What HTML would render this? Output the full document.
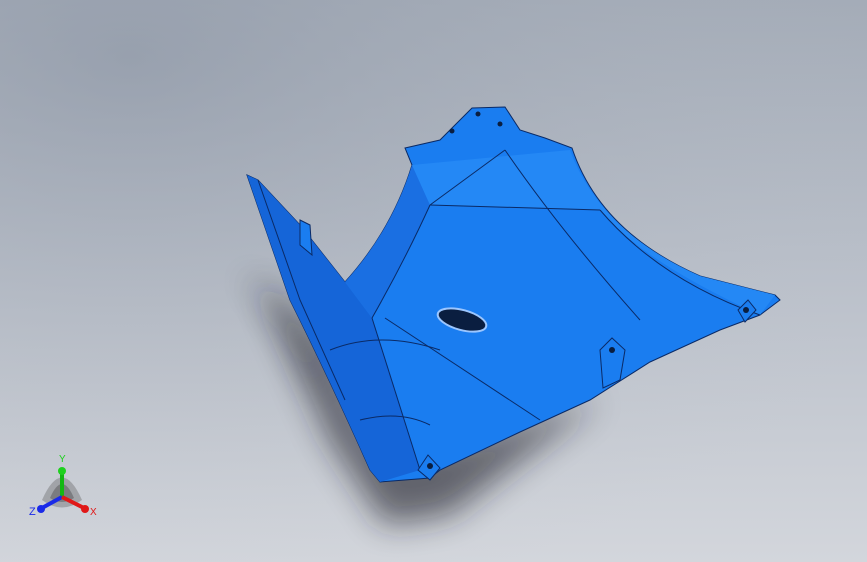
<!DOCTYPE html>
<html><head><meta charset="utf-8"><style>
html,body{margin:0;padding:0;width:867px;height:562px;overflow:hidden}
body{background:linear-gradient(180deg,#a2aab6 0%,#b8bec8 45%,#d3d6dc 100%);font-family:"Liberation Sans",sans-serif}
</style></head><body>
<svg width="867" height="562" viewBox="0 0 867 562" style="position:absolute;left:0;top:0">
<defs>
<filter id="b" x="-30%" y="-30%" width="160%" height="160%"><feGaussianBlur stdDeviation="16"/></filter>
<radialGradient id="bg" cx="0.15" cy="0.1" r="1"><stop offset="0" stop-color="#8e97a6" stop-opacity="0.6"/><stop offset="1" stop-color="#c0c5cd" stop-opacity="0"/></radialGradient>
</defs>
<rect width="867" height="562" fill="url(#bg)"/>
<path d="M260,280 L330,350 L380,450 L470,440 L600,400 L520,460 L450,515 L385,525 L330,440 Z" fill="#1c1f28" opacity="0.6" filter="url(#b)"/>
<path d="M240,270 L300,320 L320,400 L290,330 Z" fill="#1c1f28" opacity="0.4" filter="url(#b)"/>
<path d="M247,175 L258,180 L300,225 L345,282 Q392,230 412,165 L405,148 L440,140 L472,108 L505,107 L520,130 L545,138 L572,148 Q600,232 700,276 L775,295 L780,300 L760,315 L720,330 L650,362 L590,400 L520,432 L440,470 L430,478 L380,482 L370,470 Q330,380 290,300 Z" fill="#1a7df0" stroke="#0a2a66" stroke-width="1"/>
<path d="M247,175 L258,180 L300,225 L345,282 L372,318 L420,470 L380,482 L370,470 Q330,380 290,300 Z" fill="#1565d8"/>
<path d="M345,282 Q392,230 412,165 L430,205 Q405,260 372,318 Z" fill="#1a6fe2"/>
<path d="M412,165 L570,150 Q600,232 700,276 L775,295 L760,315 Q640,260 600,210 L430,205 Z" fill="#2488f5"/>
<g fill="none" stroke="#0a2a66" stroke-width="1">
<path d="M430,205 Q405,260 372,318"/>
<path d="M430,205 L505,150"/>
<path d="M430,205 L600,210"/>
<path d="M505,150 Q560,230 640,320"/>
<path d="M372,318 L420,470"/>
<path d="M385,318 L540,420"/>
<path d="M330,350 Q380,330 440,350"/>
<path d="M360,420 Q400,410 430,425"/>
<path d="M600,210 Q660,280 760,315"/>
<path d="M258,180 L300,300 L345,400"/>
</g>
<ellipse cx="462" cy="320" rx="25" ry="10" transform="rotate(15 462 320)" fill="#0a1e40" stroke="#9bc6ff" stroke-width="2"/>
<path d="M300,220 L310,225 L312,255 L300,245 Z" fill="#1a7df0" stroke="#0a2a66"/>
<path d="M600,350 L612,338 L625,350 L620,380 L603,388 Z" fill="#1a7df0" stroke="#0a2a66"/>
<circle cx="612" cy="350" r="3" fill="#0a1e40"/>
<path d="M738,310 L748,300 L756,310 L745,322 Z" fill="#1a7df0" stroke="#0a2a66"/>
<circle cx="746" cy="310" r="3" fill="#0a1e40"/>
<path d="M418,470 L428,455 L440,468 L430,480 Z" fill="#1a7df0" stroke="#0a2a66"/>
<circle cx="430" cy="466" r="3" fill="#0a1e40"/>
<circle cx="452" cy="131" r="2.5" fill="#0a1e40"/><circle cx="478" cy="114" r="2.5" fill="#0a1e40"/><circle cx="500" cy="124" r="2.5" fill="#0a1e40"/>
<path d="M42,500 Q62,455 82,500 Q62,515 42,500Z" fill="#555" opacity="0.35"/>
<path d="M50,498 Q62,470 74,498 Q62,506 50,498Z" fill="#333" opacity="0.35"/>
<line x1="62" y1="497" x2="62" y2="472" stroke="#14b814" stroke-width="4"/>
<circle cx="62" cy="471" r="4" fill="#1ed01e"/>
<line x1="62" y1="497" x2="42" y2="508" stroke="#1a2ae8" stroke-width="4"/>
<circle cx="41" cy="509" r="4" fill="#1a2ae8"/>
<line x1="62" y1="497" x2="84" y2="508" stroke="#e01818" stroke-width="4"/>
<circle cx="85" cy="509" r="4" fill="#e01818"/>
<text x="59" y="462" font-size="10" fill="#1ed01e" font-family="Liberation Sans">Y</text>
<text x="29" y="515" font-size="11" fill="#1a2ae8" font-family="Liberation Sans">Z</text>
<text x="90" y="515" font-size="10" fill="#e01818" font-family="Liberation Sans">X</text>
</svg>
</body></html>
